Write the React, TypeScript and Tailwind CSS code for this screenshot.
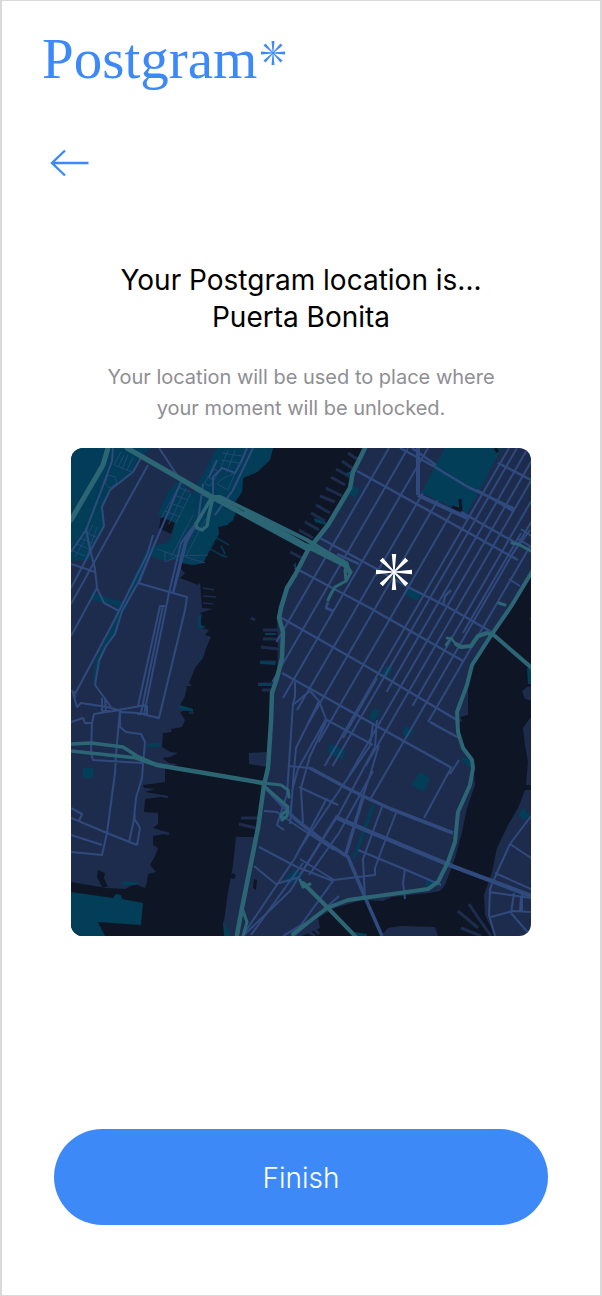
type IconProps = {
  className?: string;
};

// x positions where the midtown avenues would meet the top edge of the map
const AVENUES = [
  { top: 318, from: 0, to: 194 },
  { top: 337, from: 0, to: 234 },
  { top: 357, from: 0, to: 250 },
  { top: 378, from: 0, to: 262 },
  { top: 397, from: 0, to: 276 },
  { top: 418, from: 20, to: 294 },
  { top: 438, from: 0, to: 318 },
  { top: 446, from: 0, to: 318 },
  { top: 457, from: 0, to: 244 },
  { top: 468, from: 13, to: 330 },
  { top: 479, from: 33, to: 318 },
  { top: 491, from: 53, to: 258 },
  { top: 503, from: 74, to: 350 },
  { top: 516, from: 97, to: 274 },
];

function Asterisk({ className }: IconProps) {
  return (
    <svg viewBox="0 0 36 36" fill="currentColor" className={className} aria-hidden="true">
      {[0, 45, 90, 135, 180, 225, 270, 315].map((angle) => (
        <path
          key={angle}
          d="M15.8 0h4.4L18.6 18h-1.2z"
          transform={`rotate(${angle} 18 18)`}
        />
      ))}
    </svg>
  );
}

function BackArrow({ className }: IconProps) {
  return (
    <svg
      viewBox="0 0 40 28"
      fill="none"
      stroke="currentColor"
      strokeWidth="2.4"
      className={className}
      aria-hidden="true"
    >
      <path d="M15 1.5 2 14l13 12.5M1.5 14H38.5" />
    </svg>
  );
}

function CityMap() {
  return (
    <svg
      viewBox="0 0 460 488"
      className="block w-full bg-[#1d2c4d]"
      role="img"
      aria-label="Map"
      fill="none"
      strokeLinejoin="round"
    >
      {/* Water */}
      <g fill="#0e1626">
        <path d="M202 0 199 12 186 24 172 30 171 44 164 54 166 60 162 72 156 77 147 79 148 86 141 97 132 115 122 117 109 115 109 120 114 125 109 130 127 137 129 134 131 160 142 161 129 165 131 167 128 179 138 182 134 187 140 189 135 200 132 210 124 220 118 235 121 238 116 238 114 248 109 257 121 261 109 264 114 272 111 279 100 281 101 284 92 285 91 299 99 304 107 305 99 309 91 310 98 315 107 316 94 320 94 334 72 337 73 340 84 341 74 344 97 348 74 351 73 364 87 365 87 376 82 380 99 385 82 388 82 397 87 400 84 408 79 417 85 424 77 426 76 434 74 440 64 436 54 441 36 440 0 434V488H159L152 477 154 467 156 450 162 417 165 389 184 389 191 357 192 337 196 319 178 316 178 305 196 304 199 274 201 246 206 224 207 200 206 174 208 157 216 140 224 127 237 102 257 74 277 44 279 24 292 0Z" />
        <path d="M462 124 441 157 419 189 402 217 397 237 397 267 389 269 391 273 387 275 392 297 402 310 404 337 396 360 391 384 384 410 379 424 374 437 369 443 357 445 321 449 312 453 291 452 264 460 247 470 249 480 231 488H310L317 480 330 478 364 479 367 488H424L414 467 413 447 421 424 426 400 437 377 447 360 454 342H462V337H455L457 314 454 297 452 280 462 266V124Z" />
        <path d="M90 69 104 75 100 86 88 80ZM27 422 34 425 33 430 37 439 31 439 26 429Z" />
        <path d="m161 425 4 2-2 4-4-1zM183 431l3 1-1 10-3-2z" />
      </g>

      {/* Piers */}
      <g stroke="#1d2c4d" strokeWidth="3">
        <path d="m277 5 12 8M271 13l13 9M265 21l14 8M260 29l14 8M255 40l16 8M249 48l15 6M245 57l14 8M240 65l14 8M234 74l14 8M228 82l14 8M219 104l12 6" />
        <path d="M192 182h16M192 191h15M190 199l17 2M189 214h16M187 236h15M191 242h10M170 370h18M168 376l17 4M184 172l-4-2" />
        <path strokeWidth="1.5" d="m132 140 11 2M132 148l13 1M132 155l10 1M118 265h5" />
        <path strokeWidth="2" d="m76 346 21 3M73 382l25 4" />
        <path d="m387 463 20 17M398 456l10 15 12 17M390 480l20 8M240 478l8 8M236 483l8 5" />
      </g>
      <path fill="#1d2c4d" d="M451 243 456 239 462 238V253L454 251ZM458 171l4-5v7z" />

      {/* Parks */}
      <g fill="#023e58">
        <path d="M0 0H80L66 12 60 28 41 40 32 57 33 76 26 89 19 112 0 113Z" />
        <path d="M146 0H202L199 12 186 24 172 30 171 44 164 54 166 60 162 72 156 77 147 79 148 86 141 97 132 115 122 117 109 114 104 112 90 112 80 108 74 117 68 132 61 145 56 158 50 170 44 187 38 194 30 208 26 232 22 234 24 213 34 193 44 167 46 158 20 152 20 144 44 152 52 154 59 144 60 134 70 115 77 99 96 95 101 88 104 75 87 66 97 44 109 31 121 47 134 23Z" />
        <path d="m282 38 7 3-5 9-6-4zM337 139l13 7-4 7-13-7zM316 217l6 3-6 11-6-4zM303 260l6 3-6 11-5-4zM334 278l9 5-5 7-7-4z" />
        <path d="m260 295 15 8-4 9-15-8zM349 324l10 6-6 14-13-7zM301 356l3 2-19 51-4 2zM12 320h10v10H12z" />
        <path d="m355 432 10 1 2 4-7 4-6-3zM213 433l10-12 9 6-7 7-12 2zM452 360l7 8-6 4-6-5zM456 220h6v16h-5zM389 309l11 2v10z" />
        <path d="M0 444 42 450 45 446 50 447 51 451 72 455 70 477 27 474 34 488H0ZM51 433l17 1-3 3H51zM152 473l8 15h-7zM284 484l12 2v2h-14z" />
        <path d="m127 167 3 1v9l5 2-8 2zM127 210l3-4v6zM108 257l14 4v3l-14-3zM76 295h14v4H76zM189 213l15 1v3l-15-1zM187 235h14v3h-14zM194 185h11v2h-11zM243 70l12 4v3l-11-3zM275 25l6-2-2 7zM222 118l3-4v6z" />
      </g>

      {/* New Jersey streets */}
      <g stroke="#304a7d" strokeWidth="1" opacity="0.75">
        <path d="m50 4-7 13 18 7M53 7l-6 12M57 7l-6 14M62 9l-6 13M44 29l-7-2-3 9 5 4 7-5ZM22 77 4 109M26 79l-10 29M6 96l12 5M9 90l12 5M13 84l12 5M2 103l12 5" />
        <path d="M110 35 90 70M115 40 98 76M120 45l-15 30M107 39l12 5M103 47l14 5M99 55l14 5M94 63l15 6" />
        <path d="M157 2l-8 20M164 2l-8 22M151 5l20 3M150 12l19 3M133 35l10-14 5 3-9 14ZM136 29l7 3M151 31l13-6-7 17-11-6Z" />
        <path d="m86 101 20 7 31-1M94 103v11l15-7 25 8M122 67l-22 42M135 70l-20 38" />
        <path stroke="#023e58" strokeWidth="2" d="m144 89 14 8M138 100l12 7 6 2M150 98l4 8M143 94l-6 10" />
      </g>
      <g stroke="#304a7d" strokeWidth="2">
        <path d="M42 0 41 13 30 43 15 82 0 104M71 8 62 24 39 42 31 59 33 78 21 100 0 140M77 17 0 156M88 0l22 33 31 19M146 12l-8 17M142 50V29l9-9 13 5 6-11 6-14M132 36l-5 36-17 23-12 50M110 34 67 135M129 71l-15 22-12 51M141 49l-25 44-14 53M182 0l-20 42-18 25" />
        <path d="m15 80 3 17 6 24 2 19 7 15 15 8M0 116l24 8M26 140 0 188M82 87l-6 20-32 64-40 75M85 92l-17 43M67 135l49 14-2 13-26 108-21-5-18-1M67 135l-16 28-7 23-9 12-7 15-4 24 16 22M98 145l-25 121M94 158h-5L67 258M92 158 70 265M67 258h9v8H66M31 250v13h9M34 250l1 13M75 257l-28 5-11-3-26-4-4 4-5-17M3 243l1 7" />
        <path d="M49 262v17l6 5 15 2 4 8-2 23-1 13-6 20-2 20 6 10-3 17M49 262l-4 44-1 19-8 60-5 22-31-3M0 274l12-4 2 5h7l2-9 26-4M21 275l-1 30 2 7 49 3M64 367l-6 27M0 370l36 15 30 12M0 387l31 10M0 360l11 6-3 7" />
      </g>

      {/* Manhattan avenues */}
      <g stroke="#304a7d" strokeWidth="2">
        {AVENUES.map(({ top, from, to }) => (
          <line
            key={top}
            x1={top - from * 0.58}
            y1={from}
            x2={top - to * 0.58}
            y2={to}
          />
        ))}
        <path d="m450 85-58 100M446 90l14 9M450 81l10 7M459 82l-19 26M438 131l11 7" />
      </g>
      <path fill="#023e58" d="m374 0h57L396 66 351 45 363 20z" />
      <path stroke="#0e1626" strokeWidth="3" d="m389 51 1 11-9-3M424 0l3 4" />

      {/* Cross streets */}
      <g stroke="#304a7d" strokeWidth="2.5">
        <path d="m286 23 161 89M249 90l53 29 35 20 40 20 47 27M224 120l75 40 93 53M209 169l79 45 98 58M211 225l84 47 86 48M329 0l35 19 33 20 47 22M341 0l24 17M427 15l33 17M390 64l55 31M406 42l36 21" />
        <path d="m359 274 29 16" />
        <path strokeWidth="4" d="M347 0V47M347 47l49 23" />
        <path d="m372 157 2-9 6-6M266 106l22 10M270 113l-9-7M257 154l-2 6 7 3" />
      </g>

      {/* Downtown */}
      <g stroke="#304a7d" strokeWidth="2">
        <path d="M224 234v15l-2 7-6 90-10 31 7 5M239 243l-16 13M239 243l9 10 7 18-28 50-6 22M248 253l-23 47-2 22-4 54M256 272l-17 36-9 32 2 35" />
        <path d="m256 272 46 25M306 230l-34 60M302 275l-3 23-29 42-42 62M306 272l-2 27-36 67-38 60M217 318l22 2M228 339l39 18M265 369l-46 74-47 45M302 323l-34 62-30 42M308 297l-9 30-8 24M325 365l-14 36-7 19v7l-42 5M312 356l-20 55 2 40" />
        <path d="m188 399 38 20 36 14-32 44-18 11M183 418l22 18 24-7M193 363l13 1 17 12 40 26M229 411l34 21M287 402l46 19 37 16M334 421l-2 14 2 16M380 320l-27 50M388 312l-9 14M172 487l52-77 32-60M180 487l52-72M223 488l45-40" />
        <path strokeWidth="3.5" d="m239 320 35 19 20 10 26 12 62 24M292 349l-18 60M194 339l30 32 27 21 26 17 11 26 5 12 18 41" />
        <path strokeWidth="4.5" d="m264 369 40 17 77 32 82 31" />
      </g>

      {/* Brooklyn streets */}
      <g stroke="#304a7d" strokeWidth="2">
        <path d="m460 368-21 28-11 24-9 21-1 26 6 21M439 396l21 14M424 425l36 16M418 444l42 6M443 445l-3 20M451 443v20M440 465l20 23M420 469l22-6 18 1M450 449l-1 14" />
      </g>

      {/* Highways */}
      <g stroke="#2c6675" strokeLinecap="round">
        <path strokeWidth="5" d="M37 0 32 17 0 72" />
        <path strokeWidth="5" d="m56 0 85 49 94 51" />
        <path strokeWidth="4" d="M140 49h9l87 43 37 23" />
        <path strokeWidth="6" d="m176 65 60 34" />
        <path strokeWidth="3.5" d="m141 49-16 27 1 4 5 2 5-4 2-12 4-16" />
        <path strokeWidth="5" d="m236 98 38 19 5 7" />
        <path strokeWidth="3" d="m258 105 18 10 3 11-4 7-11 6-4 7-3 6M274 122l1 10" />
        <path strokeWidth="4.5" d="m294 0-12 24-3 16-22 37-20 25-13 25-8 13-6 20-2 10 4 14-1 26-5 20-5 15-1 29-3 46-4 17-6 43-8 40-8 40-5 27" />
        <path strokeWidth="3" d="m171 460 5 14-4 14" />
        <path strokeWidth="3.5" d="m0 296 20-1 32 4 14 9 20 9M0 303l66 7" />
        <path strokeWidth="4.5" d="m66 310 20 7 106 18" />
        <path strokeWidth="3" d="m192 335 18 2 7 5 1 7M194 339l23 20-1 9-5 4-1-5 4-3" />
        <path strokeWidth="4" d="m462 122-21 35-22 32-18 28-5 20-10 27 1 20 5 16 9 12 1 8-3 17-12 27-3 30-7 20-10 20-10 7-50 7-30 4-21 8-34 26" />
        <path strokeWidth="4" d="m462 221-38-33-8-3-9 3-7 10-10 1-5-3" />
        <path strokeWidth="2.5" d="m384 195-4-5-5 7M380 191l-4-1" />
        <path strokeWidth="4" d="m232 435 25 25 27 28" />
        <path strokeWidth="3" d="m229 432 3 7 7-3M441 95l6 1 15 8M428 155l6 2" />
      </g>
    </svg>
  );
}

export default function App() {
  return (
    <main
      className="
        min-h-screen flex flex-col bg-white
        border-x-2 border-y border-[#d9d9d9]
        font-['Inter','Liberation_Sans',sans-serif]
      "
    >
      {/* Logo */}
      <header className="flex items-start px-10 pt-[26px] text-[#3d89f8]">
        <span className="font-['Liberation_Serif',serif] text-[57px] leading-16">
          Postgram
        </span>
        <Asterisk className="mt-[14px] ml-1 size-6" />
      </header>

      <div className="px-12 pt-[58px]">
        <button type="button" aria-label="Back" className="block text-[#3d89f8]">
          <BackArrow className="h-7 w-10" />
        </button>
      </div>

      {/* Location */}
      <section className="px-[69px] pt-[85px] text-center">
        <h1 className="text-[28px] leading-[37px] font-normal text-black">
          Your Postgram location is...
          <br />
          Puerta Bonita
        </h1>

        <p className="mt-[26px] text-[20px] leading-[31px] font-normal text-[#8e8e93]">
          Your location will be used to place where
          <br />
          your moment will be unlocked.
        </p>

        <div className="relative mt-6 overflow-hidden rounded-xl">
          <CityMap />
          <Asterisk className="absolute top-[106px] left-[305px] size-9 text-white" />
        </div>
      </section>

      <div className="mt-auto px-[52px] pb-[70px]">
        <button
          type="button"
          className="h-24 w-full rounded-full bg-[#3d89f8] pt-[2px] text-[28px] font-light text-white"
        >
          Finish
        </button>
      </div>
    </main>
  );
}
